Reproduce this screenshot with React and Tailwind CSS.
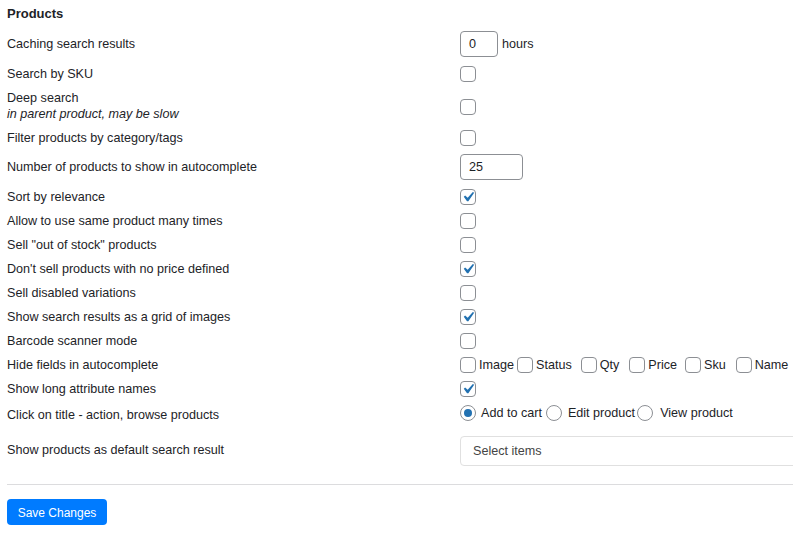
import React from "react";

const font = { fontFamily: '"Liberation Sans", Arial, sans-serif' };

function Check({ checked }) {
  return (
    <span className="relative inline-block w-4 h-4 shrink-0 rounded-[4px] border border-[#8c8f94] bg-white">
      {checked && (
        <svg viewBox="0 0 20 20" className="absolute left-[-3px] top-[-3px] w-5 h-5">
          <path d="M14.83 4.89l1.34.94-5.81 8.38H9.02L5.78 9.67l1.34-1.25 2.57 2.4z" fill="#2271b1" />
        </svg>
      )}
    </span>
  );
}

function Radio({ checked }) {
  return (
    <span className="inline-flex items-center justify-center w-4 h-4 shrink-0 rounded-full border border-[#8c8f94] bg-white">
      {checked && <span className="w-2 h-2 rounded-full bg-[#2271b1]" />}
    </span>
  );
}

function Row({ h, label, children, labelClass = "" }) {
  return (
    <div className={`flex items-center ${h}`}>
      <div className={`w-[453px] shrink-0 ${labelClass}`}>{label}</div>
      <div className="flex items-center flex-1 min-w-0">{children}</div>
    </div>
  );
}

export default function App() {
  const rows24 = [
    ["Allow to use same product many times", false],
    ['Sell "out of stock" products', false],
    ["Don't sell products with no price defined", true],
    ["Sell disabled variations", false],
    ["Show search results as a grid of images", true],
    ["Barcode scanner mode", false],
  ];
  return (
    <div className="w-[793px] h-[536px] overflow-hidden bg-white pl-[7px] text-[12.6px] leading-4 text-[#1d2327]" style={font}>
      <div className="h-[28px] flex items-center font-bold text-[13px]">Products</div>
      <Row h="h-[32px]" label="Caching search results">
        <div className="w-[38px] h-[26px] rounded-[4px] border border-[#8c8f94] flex items-center pl-[8px]">0</div>
        <span className="ml-[4px]">hours</span>
      </Row>
      <Row h="h-[28px]" label="Search by SKU">
        <Check />
      </Row>
      <div className="flex h-[38px]">
        <div className="w-[453px] shrink-0 pt-[2px]">
          <div>Deep search</div>
          <div className="italic">in parent product, may be slow</div>
        </div>
        <div className="flex items-center">
          <Check />
        </div>
      </div>
      <Row h="h-[24px]" label="Filter products by category/tags">
        <Check />
      </Row>
      <Row h="h-[34px]" label="Number of products to show in autocomplete">
        <div className="w-[63px] h-[26px] rounded-[4px] border border-[#8c8f94] flex items-center pl-[8px]">25</div>
      </Row>
      <Row h="h-[25px]" label="Sort by relevance">
        <Check checked />
      </Row>
      {rows24.map(([l, c]) => (
        <Row key={l} h="h-[24px]" label={l}>
          <Check checked={c} />
        </Row>
      ))}
      <Row h="h-[24px]" label="Hide fields in autocomplete">
        <Check />
        <span className="ml-[3px] mr-[3px]">Image</span>
        <Check />
        <span className="ml-[3px] mr-[9px]">Status</span>
        <Check />
        <span className="ml-[3px] mr-[10px]">Qty</span>
        <Check />
        <span className="ml-[3px] mr-[8px]">Price</span>
        <Check />
        <span className="ml-[3px] mr-[10px]">Sku</span>
        <Check />
        <span className="ml-[3px] whitespace-nowrap">Name</span>
      </Row>
      <Row h="h-[24px]" label="Show long attribute names">
        <Check checked />
      </Row>
      <Row h="h-[23px]" label="Click on title - action, browse products" labelClass="pt-[5px]">
        <Radio checked />
        <span className="ml-[5px] mr-[4px]">Add to cart</span>
        <Radio />
        <span className="ml-[6px] mr-[2px]">Edit product</span>
        <Radio />
        <span className="ml-[7px]">View product</span>
      </Row>
      <Row h="h-[53px]" label="Show products as default search result" labelClass="pb-[2px]">
        <div className="w-[360px] shrink-0 h-[30px] rounded-[4px] border border-[#e0e0e0] flex items-center pl-[12px] text-[#444]">
          Select items
        </div>
      </Row>
      <div className="h-[7px]" />
      <div className="border-t border-[#dcdcde]" />
      <div className="pt-[14px]">
        <button className="w-[100px] h-[26px] rounded-[4px] bg-[#007bff] text-white text-[12px] flex items-center justify-center pt-[1px]" style={font}>
          Save Changes
        </button>
      </div>
    </div>
  );
}
